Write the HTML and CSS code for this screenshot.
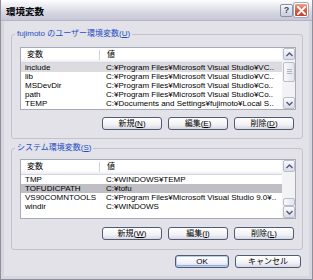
FILE: index.html
```html
<!DOCTYPE html>
<html lang="ja">
<head>
<meta charset="utf-8">
<title>環境変数</title>
<link rel="stylesheet" href="styles.css">
</head>
<body>
<div class="window">
  <div class="titlebar">
    <span class="title">環境変数</span>
    <div class="tb-buttons">
      <span class="tb-btn help">?</span>
      <span class="tb-btn close">
        <svg width="9" height="9" viewBox="0 0 9 9"><path d="M1 1 L8 8 M8 1 L1 8" stroke="#fff" stroke-width="1.8" stroke-linecap="square"/></svg>
      </span>
    </div>
  </div>
  <div class="client">
    <fieldset class="group group-user">
      <legend>fujimoto のユーザー環境変数(<u>U</u>)</legend>
      <div class="list list-user">
        <div class="list-main">
          <div class="header"><span class="hcol1">変数</span><span class="hcol2">値</span></div>
          <div class="row sel-light"><span class="c1">include</span><span class="c2">C:¥Program Files¥Microsoft Visual Studio¥VC..</span></div>
          <div class="row"><span class="c1">lib</span><span class="c2">C:¥Program Files¥Microsoft Visual Studio¥VC..</span></div>
          <div class="row"><span class="c1">MSDevDir</span><span class="c2">C:¥Program Files¥Microsoft Visual Studio¥Co..</span></div>
          <div class="row"><span class="c1">path</span><span class="c2">C:¥Program Files¥Microsoft Visual Studio¥Co..</span></div>
          <div class="row"><span class="c1">TEMP</span><span class="c2">C:¥Documents and Settings¥fujimoto¥Local S..</span></div>
        </div>
        <div class="vscroll">
          <div class="sb-btn"><svg width="7" height="5" viewBox="0 0 7 5"><path d="M0.5 4 L3.5 1 L6.5 4" fill="none" stroke="#4d5a78" stroke-width="1.4"/></svg></div>
          <div class="sb-track">
            <div class="sb-thumb thumb-user"><span class="grip"></span></div>
          </div>
          <div class="sb-btn"><svg width="7" height="5" viewBox="0 0 7 5"><path d="M0.5 1 L3.5 4 L6.5 1" fill="none" stroke="#4d5a78" stroke-width="1.4"/></svg></div>
        </div>
      </div>
      <div class="btn-row">
        <span class="btn">新規(<u>N</u>)</span>
        <span class="btn">編集(<u>E</u>)</span>
        <span class="btn">削除(<u>D</u>)</span>
      </div>
    </fieldset>

    <fieldset class="group group-sys">
      <legend>システム環境変数(<u>S</u>)</legend>
      <div class="list list-sys">
        <div class="list-main">
          <div class="header"><span class="hcol1">変数</span><span class="hcol2">値</span></div>
          <div class="row"><span class="c1">TMP</span><span class="c2">C:¥WINDOWS¥TEMP</span></div>
          <div class="row sel-dark"><span class="c1">TOFUDICPATH</span><span class="c2">C:¥tofu</span></div>
          <div class="row"><span class="c1">VS90COMNTOOLS</span><span class="c2">C:¥Program Files¥Microsoft Visual Studio 9.0¥..</span></div>
          <div class="row"><span class="c1">windir</span><span class="c2">C:¥WINDOWS</span></div>
        </div>
        <div class="vscroll">
          <div class="sb-btn"><svg width="7" height="5" viewBox="0 0 7 5"><path d="M0.5 4 L3.5 1 L6.5 4" fill="none" stroke="#4d5a78" stroke-width="1.4"/></svg></div>
          <div class="sb-track track-sys">
            <div class="sb-thumb thumb-sys"></div>
          </div>
          <div class="sb-btn"><svg width="7" height="5" viewBox="0 0 7 5"><path d="M0.5 1 L3.5 4 L6.5 1" fill="none" stroke="#4d5a78" stroke-width="1.4"/></svg></div>
        </div>
      </div>
      <div class="btn-row">
        <span class="btn">新規(<u>W</u>)</span>
        <span class="btn">編集(<u>I</u>)</span>
        <span class="btn">削除(<u>L</u>)</span>
      </div>
    </fieldset>

    <div class="dlg-buttons">
      <span class="btn btn-default btn-ok">OK</span>
      <span class="btn btn-cancel">キャンセル</span>
    </div>
  </div>
</div>
</body>
</html>
```

FILE: styles.css
```css
html, body {
  margin: 0;
  padding: 0;
}
body {
  width: 313px;
  height: 280px;
  overflow: hidden;
  background: #e3e2e8;
  font-family: "Liberation Sans", "Noto Sans CJK JP", sans-serif;
  font-size: 8px;
  color: #000;
}
.window {
  width: 313px;
  height: 280px;
  box-sizing: border-box;
  display: flex;
  flex-direction: column;
  background: #e3e2e8;
  border: 1px solid #8e8e9c;
  border-top: none;
}
.titlebar {
  height: 21px;
  flex: none;
  display: flex;
  align-items: center;
  justify-content: space-between;
  padding: 0 4px 0 4px;
  background: linear-gradient(to bottom, #ffffff 0%, #eeeef4 25%, #d8d8e4 60%, #c6c6d6 100%);
  border-bottom: 1px solid #b4b4c4;
  box-sizing: border-box;
}
.title {
  font-family: "Noto Sans CJK JP", sans-serif;
  font-weight: bold;
  font-size: 9.5px;
  line-height: 12px;
  padding-left: 1px;
  padding-top: 1px;
}
.tb-buttons {
  display: flex;
  gap: 1px;
  align-items: center;
}
.tb-btn {
  width: 13px;
  height: 13px;
  box-sizing: border-box;
  border-radius: 2px;
  display: flex;
  align-items: center;
  justify-content: center;
}
.help {
  background: linear-gradient(to bottom, #f6f7fb 0%, #c9cddc 100%);
  border: 1px solid #8a90a8;
  color: #3b4868;
  font-weight: bold;
  font-size: 9px;
  line-height: 11px;
}
.close {
  background: linear-gradient(to bottom, #eea08c 0%, #d75a3e 55%, #c4452c 100%);
  border: 1px solid #ffffff;
  box-shadow: 0 0 0 1px #a8a8b8;
  width: 14px;
  height: 14px;
}
.client {
  flex: 1;
  display: flex;
  flex-direction: column;
  padding: 8px 6px 0 7px;
  border-left: 3px solid #d6d6de;
  border-right: 3px solid #d6d6de;
  border-bottom: 3px solid #d6d6de;
}
.group {
  margin: 0;
  border: 1px solid #c2c2cc;
  border-radius: 3px;
  padding: 8px 6px 8px 8px;
  min-width: 0;
}
.group legend {
  color: #1f4fc4;
  font-size: 8px;
  line-height: 10px;
  padding: 0 2px;
  margin-left: -5px;
}
.group-sys {
  margin-top: 4px;
  padding-top: 6px;
  padding-bottom: 9px;
}
.list {
  background: #fff;
  border: 1px solid #a6abb8;
  display: flex;
}
.list-user { height: 61px; }
.list-sys { height: 58px; }
.list-main {
  flex: 1;
  overflow: hidden;
  min-width: 0;
}
.header {
  height: 15px;
  box-sizing: border-box;
  display: flex;
  align-items: center;
  background: linear-gradient(to bottom, #ffffff 0%, #ffffff 75%, #ececf0 100%);
  border-bottom: 1px solid #d6d6de;
}
.hcol1 {
  width: 79px;
  padding-left: 6px;
  box-sizing: border-box;
  border-right: 1px solid #d0d0d8;
  line-height: 10px;
}
.hcol2 {
  padding-left: 7px;
  line-height: 10px;
}
.row {
  height: 9px;
  line-height: 9px;
  display: flex;
  white-space: nowrap;
}
.c1 {
  width: 80px;
  padding-left: 4px;
  box-sizing: border-box;
  flex: none;
}
.c2 {
  padding-left: 5px;
}
.sel-light { background: #dcdce0; }
.sel-dark { background: #bebec4; }
.vscroll {
  width: 13px;
  flex: none;
  display: flex;
  flex-direction: column;
  background: #f3f3f6;
}
.sb-btn {
  height: 12px;
  margin: 0 0 0 1px;
  box-sizing: border-box;
  border: 1px solid #b8bccb;
  border-radius: 2px;
  background: linear-gradient(to bottom, #fbfbfd 0%, #dadce6 100%);
  display: flex;
  align-items: center;
  justify-content: center;
}
.sb-track {
  flex: 1;
  display: flex;
  flex-direction: column;
  padding: 2px 0 2px 1px;
}
.sb-thumb {
  box-sizing: border-box;
  border: 1px solid #b8bccb;
  border-radius: 2px;
  background: linear-gradient(to right, #f8f8fb 0%, #e4e5ec 100%);
  display: flex;
  align-items: center;
  justify-content: center;
}
.thumb-user { height: 20px; }
.thumb-sys { height: 8px; margin-top: auto; }
.track-sys { padding-bottom: 0; }
.grip {
  width: 5px;
  height: 6px;
  background: repeating-linear-gradient(to bottom, #b0b4c4 0, #b0b4c4 1px, transparent 1px, transparent 2px);
}
.btn-row {
  display: flex;
  justify-content: flex-end;
  gap: 6px;
  margin-top: 7px;
  padding-right: 2px;
}
.btn {
  width: 60px;
  height: 13px;
  box-sizing: border-box;
  border: 1px solid #4f5a73;
  border-radius: 3px;
  background: linear-gradient(to bottom, #ffffff 0%, #f2f2f6 60%, #d8d8e2 100%);
  display: flex;
  align-items: center;
  justify-content: center;
  line-height: 10px;
  white-space: nowrap;
}
.group-sys .btn-row { margin-top: 8px; }
.dlg-buttons {
  display: flex;
  justify-content: flex-end;
  gap: 6px;
  margin-top: 5px;
  padding-right: 2px;
}
.btn-ok { width: 54px; }
.btn-cancel { width: 66px; }
.btn-default {
  box-shadow: inset 0 0 0 1px #b9cdf0, inset 0 -1px 0 1px #97b3e6;
}
```
